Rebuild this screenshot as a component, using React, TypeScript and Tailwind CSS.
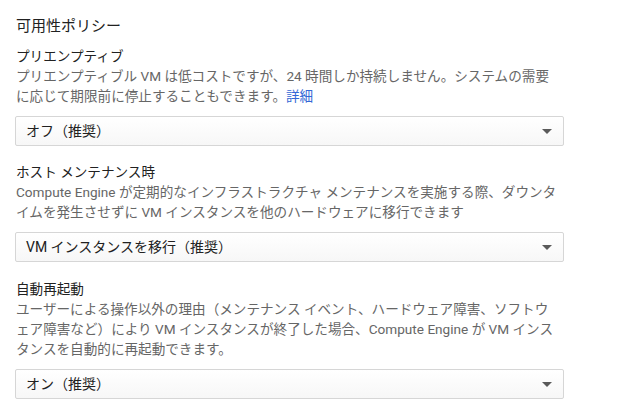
const sections = [
  {
    title: "プリエンプティブ",
    desc: (
      <>
        プリエンプティブル VM は低コストですが、24 時間しか持続しません。システムの需要
        <br />
        に応じて期限前に停止することもできます。
        <a href="#" className="text-[#3367d6]">
          詳細
        </a>
      </>
    ),
    value: "オフ（推奨）",
  },
  {
    title: "ホスト メンテナンス時",
    desc: (
      <>
        Compute Engine が定期的なインフラストラクチャ メンテナンスを実施する際、ダウンタ
        <br />
        イムを発生させずに VM インスタンスを他のハードウェアに移行できます
      </>
    ),
    value: "VM インスタンスを移行（推奨）",
  },
  {
    title: "自動再起動",
    desc: (
      <>
        ユーザーによる操作以外の理由（メンテナンス イベント、ハードウェア障害、ソフトウ
        <br />
        ェア障害など）により VM インスタンスが終了した場合、Compute Engine が VM インス
        <br />
        タンスを自動的に再起動できます。
      </>
    ),
    value: "オン（推奨）",
  },
];

function Select({ value }: { value: string }) {
  return (
    <div className="flex h-[30px] w-[549px] items-center justify-between rounded-[2px] border border-[#d6d6d6] bg-gradient-to-b from-white to-[#f7f7f7] pl-[10px] pr-[11px]">
      <span className="text-[14px] text-[#212121]">{value}</span>
      <span className="h-0 w-0 border-x-[5px] border-t-[5px] border-x-transparent border-t-[#5a5a5a]" />
    </div>
  );
}

export default function App() {
  return (
    <div
      className="min-h-[411px] w-[627px] bg-white pl-[15px] pt-[16px] leading-[20px]"
      style={{ fontFamily: 'Roboto, "Noto Sans CJK JP", sans-serif' }}
    >
      <h2 className="mb-[10px] pl-px text-[15px] text-[#212121]">可用性ポリシー</h2>

      <div className="flex flex-col gap-[16px]">
        {sections.map((s, i) => (
          <div key={s.title} className={i === 2 ? "pt-[1px]" : ""}>
            <h3 className="pl-px text-[13.6px] text-[#212121]">{s.title}</h3>
            <p className="mb-[10px] w-[600px] whitespace-nowrap pl-px text-[13.6px] text-[#666666]">
              {s.desc}
            </p>
            <Select value={s.value} />
          </div>
        ))}
      </div>
    </div>
  );
}
